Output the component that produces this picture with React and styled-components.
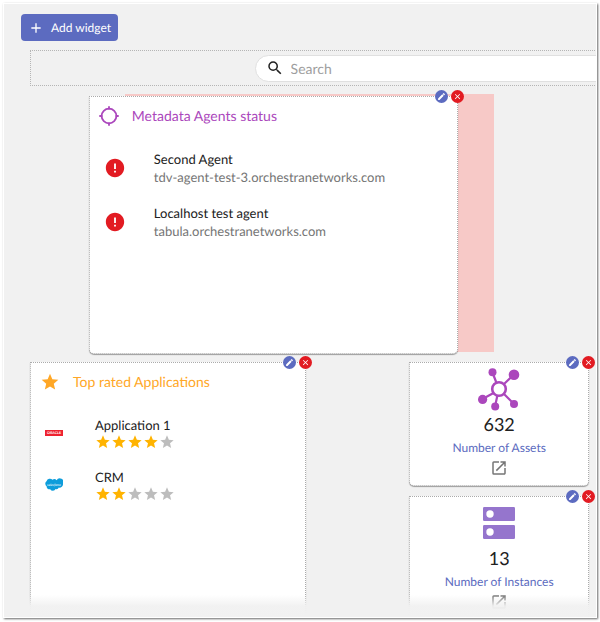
import React from "react";
import styled, { createGlobalStyle } from "styled-components";
import {
  MdAdd,
  MdClose,
  MdEdit,
  MdError,
  MdOpenInNew,
  MdSearch,
  MdStar,
} from "react-icons/md";

const GlobalStyle = createGlobalStyle`
  * { box-sizing: border-box; }
  body {
    margin: 0;
    background: #fff;
    font-family: Lato, "Liberation Sans", sans-serif;
    font-size: 13px;
    line-height: 18px;
    color: #212121;
    text-rendering: geometricPrecision;
  }
  button, input { font-family: inherit; text-rendering: inherit; }
  svg { display: block; flex-shrink: 0; }
`;

const Page = styled.div`
  height: 100vh;
  padding: 3px 3px 4px 3px;
`;

const Frame = styled.main`
  position: relative;
  height: 100%;
  overflow: hidden;
  background: #f1f1f1;
  border: 1px solid #fff;
  box-shadow: 1px 1px 2px rgba(0, 0, 0, 0.6);
  padding: 10px 7px 0 26px;
`;

const AddButton = styled.button`
  display: flex;
  align-items: center;
  gap: 7px;
  height: 27px;
  margin-left: -9px;
  padding: 0 7px;
  border: 0;
  border-radius: 4px;
  background: #5c6bc0;
  color: #fff;
  font-size: 12px;
`;

const SearchBar = styled.div`
  display: flex;
  align-items: center;
  height: 36px;
  margin: 9px -10px 8px 0;
  padding-left: 40%;
  border: 1px dotted #b5b5b5;
`;

const SearchField = styled.label`
  display: flex;
  flex: 1;
  align-items: center;
  gap: 7px;
  height: 27px;
  margin-right: -24px;
  padding-left: 10px;
  border: 1px solid #e0e0e0;
  border-radius: 14px;
  background: #fff;
`;

const SearchInput = styled.input`
  flex: 1;
  min-width: 0;
  padding: 0;
  border: 0;
  outline: 0;
  background: transparent;
  font-size: 14px;
  &::placeholder { color: #9e9e9e; opacity: 1; }
`;

const AgentsRow = styled.section`
  display: grid;
  grid-template-columns: 95fr 370fr 95fr;
`;

const DropTarget = styled.div`
  position: relative;
  grid-column: 2;
  min-height: 258px;
  background: #f7c9c7;
`;

const Card = styled.article`
  position: relative;
  border: 1px dotted #ababab;
  border-radius: 0 0 5px 5px;
  background: #fff;
  box-shadow: 0 1px 1px rgba(0, 0, 0, 0.35);
`;

const DraggedCard = styled(Card)`
  position: absolute;
  top: 2px;
  left: -36px;
  width: 100%;
  height: 100%;
`;

const CardHeader = styled.h2`
  display: flex;
  align-items: center;
  gap: 13px;
  height: 38px;
  margin: 0;
  padding: 0 9px;
  color: ${(p) => p.$color};
  font-size: 14px;
  font-weight: 400;
`;

const CardActions = styled.div`
  position: absolute;
  top: -7px;
  right: -7px;
  display: flex;
  gap: 3px;
`;

const RoundButton = styled.button`
  display: grid;
  place-items: center;
  width: 13px;
  height: 13px;
  padding: 0;
  border: 0;
  border-radius: 50%;
  background: ${(p) => (p.$danger ? "#e21b22" : "#5c6bc0")};
  color: #fff;
`;

const ItemList = styled.ul`
  display: grid;
  gap: 18px;
  margin: 0;
  padding: 15px 14px;
  list-style: none;
`;

const Item = styled.li`
  display: flex;
  align-items: center;
  gap: ${(p) => p.$gap}px;
`;

const Secondary = styled.div`
  color: #757575;
`;

const Stars = styled.div`
  display: flex;
  height: 16px;
  align-items: center;
`;

const LowerRow = styled.section`
  display: grid;
  grid-template-columns: 276fr 104fr 180fr;
  margin-top: 10px;
`;

const AppsCard = styled(Card)`
  min-height: 270px;
`;

const StatColumn = styled.div`
  display: grid;
  grid-column: 3;
  align-content: start;
  gap: 10px;
`;

const StatCard = styled(Card)`
  display: flex;
  flex-direction: column;
  align-items: center;
  padding: 5px 0 8px;
`;

const StatIcon = styled.div`
  display: grid;
  place-items: center;
  height: 42px;
`;

const StatValue = styled.div`
  font-size: 18px;
  line-height: 29px;
`;

const StatLabel = styled.div`
  color: #5c6bc0;
  font-size: 12px;
`;

const OpenLink = styled.a`
  margin-top: 2px;
  color: #757575;
`;

const BottomFade = styled.div`
  position: absolute;
  right: 0;
  bottom: 0;
  left: 0;
  height: 22px;
  background: linear-gradient(rgba(241, 241, 241, 0), rgba(241, 241, 241, 0.95) 50%, #f1f1f1);
  pointer-events: none;
`;

function TargetIcon() {
  return (
    <svg width="20" height="20" viewBox="0 0 20 20" fill="none" stroke="currentColor" strokeWidth="1.8" aria-hidden="true">
      <circle cx="10" cy="10" r="7.4" />
      <path d="M10 0.3V3.4 M10 16.6V19.7 M0.3 10H3.4 M16.6 10H19.7" />
    </svg>
  );
}

function AssetsIcon() {
  return (
    <svg width="42" height="43" viewBox="0 0 42 43" fill="#ab47bc" aria-hidden="true">
      <g stroke="#ab47bc" strokeWidth="2.2" fill="none">
        <path d="M14.5 4.5 L18.5 15 M36 6.5 L26 16 M4.5 31 L15.5 25 M17 38.5 L19.5 27 M36 36 L26 26" />
        <circle cx="21" cy="21" r="6.8" strokeWidth="2.6" />
      </g>
      <circle cx="14.5" cy="4.3" r="4" />
      <circle cx="36" cy="6.8" r="5.3" />
      <circle cx="4.6" cy="31.4" r="4.6" />
      <circle cx="17.2" cy="38.6" r="4" />
      <circle cx="36" cy="36" r="4" />
    </svg>
  );
}

function InstancesIcon() {
  return (
    <svg width="32" height="32" viewBox="0 0 32 32" fill="#9575cd" aria-hidden="true">
      <rect width="32" height="14" rx="1.2" />
      <rect y="18" width="32" height="14" rx="1.2" />
      <circle cx="7" cy="7" r="3.7" fill="#fff" />
      <circle cx="7" cy="25" r="3.7" fill="#fff" />
    </svg>
  );
}

function OracleLogo() {
  return (
    <svg width="18" height="14" viewBox="0 0 18 14" role="img" aria-label="Oracle">
      <rect y="4" width="18" height="6" fill="#ee2230" />
      <text x="9" y="8.4" fill="#fff" fontSize="3.6" fontWeight="700" textAnchor="middle">ORACLE</text>
    </svg>
  );
}

function SalesforceLogo() {
  return (
    <svg width="18" height="14" viewBox="0 0 18 14" role="img" aria-label="Salesforce">
      <path
        fill="#0d9ddb"
        d="M7.5 1.8 A3 3 0 0 1 11.6 2.3 A3.6 3.6 0 0 1 18 5.8 A3.6 3.6 0 0 1 13.8 9.6 A2.6 2.6 0 0 1 10.6 11 A3 3 0 0 1 5.2 11.2 A2.7 2.7 0 0 1 1.7 8.4 A3.2 3.2 0 0 1 1.5 3.2 A3.6 3.6 0 0 1 7.5 1.8Z"
      />
      <text x="9" y="7.7" fill="#fff" fontSize="3.4" fontStyle="italic" textAnchor="middle">salesforce</text>
    </svg>
  );
}

function Actions({ name }) {
  return (
    <CardActions>
      <RoundButton type="button" aria-label={`Edit ${name}`}>
        <MdEdit size={9} />
      </RoundButton>
      <RoundButton type="button" $danger aria-label={`Remove ${name}`}>
        <MdClose size={9} />
      </RoundButton>
    </CardActions>
  );
}

function Rating({ value }) {
  return (
    <Stars role="img" aria-label={`${value} out of 5`}>
      {[1, 2, 3, 4, 5].map((n) => (
        <MdStar key={n} size={16} color={n <= value ? "#ffb300" : "#bdbdbd"} />
      ))}
    </Stars>
  );
}

function Stat({ icon, value, label }) {
  return (
    <StatCard>
      <Actions name={label} />
      <StatIcon>{icon}</StatIcon>
      <StatValue>{value}</StatValue>
      <StatLabel>{label}</StatLabel>
      <OpenLink href="#" aria-label={`Open ${label}`}>
        <MdOpenInNew size={18} />
      </OpenLink>
    </StatCard>
  );
}

const agents = [
  { name: "Second Agent", host: "tdv-agent-test-3.orchestranetworks.com" },
  { name: "Localhost test agent", host: "tabula.orchestranetworks.com" },
];

const applications = [
  { name: "Application 1", rating: 4, Logo: OracleLogo },
  { name: "CRM", rating: 2, Logo: SalesforceLogo },
];

export default function App() {
  return (
    <Page>
      <GlobalStyle />
      <Frame>
        <AddButton type="button">
          <MdAdd size={16} />
          Add widget
        </AddButton>
        <SearchBar>
          <SearchField>
            <MdSearch size={18} />
            <SearchInput type="search" placeholder="Search" aria-label="Search" />
          </SearchField>
        </SearchBar>
        <AgentsRow>
          <DropTarget>
            <DraggedCard>
              <Actions name="Metadata Agents status" />
              <CardHeader $color="#ab47bc">
                <TargetIcon />
                Metadata Agents status
              </CardHeader>
              <ItemList>
                {agents.map((agent) => (
                  <Item key={agent.name} $gap={28}>
                    <MdError size={22} color="#e21b22" />
                    <div>
                      <div>{agent.name}</div>
                      <Secondary>{agent.host}</Secondary>
                    </div>
                  </Item>
                ))}
              </ItemList>
            </DraggedCard>
          </DropTarget>
        </AgentsRow>
        <LowerRow>
          <AppsCard>
            <Actions name="Top rated Applications" />
            <CardHeader $color="#ffa726">
              <MdStar size={20} />
              Top rated Applications
            </CardHeader>
            <ItemList>
              {applications.map(({ name, rating, Logo }) => (
                <Item key={name} $gap={32}>
                  <Logo />
                  <div>
                    <div>{name}</div>
                    <Rating value={rating} />
                  </div>
                </Item>
              ))}
            </ItemList>
          </AppsCard>
          <StatColumn>
            <Stat icon={<AssetsIcon />} value={632} label="Number of Assets" />
            <Stat icon={<InstancesIcon />} value={13} label="Number of Instances" />
          </StatColumn>
        </LowerRow>
        <BottomFade />
      </Frame>
    </Page>
  );
}
